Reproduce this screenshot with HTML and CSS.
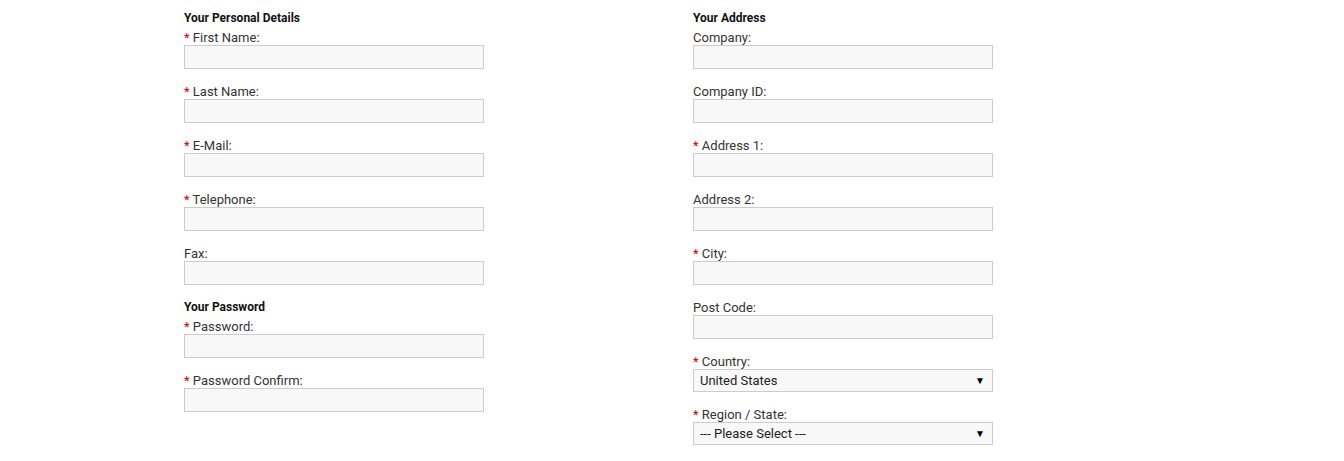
FILE: index.html
```html
<!DOCTYPE html>
<html lang="en">
<head>
<meta charset="UTF-8">
<meta name="viewport" content="width=device-width, initial-scale=1.0">
<title>Register Account</title>
<link rel="stylesheet" href="styles.css">
</head>
<body>
<form class="register">
  <div class="column">
    <fieldset>
      <legend>Your Personal Details</legend>
      <div class="field">
        <label><span class="req">*</span> First Name:</label>
        <input type="text">
      </div>
      <div class="field">
        <label><span class="req">*</span> Last Name:</label>
        <input type="text">
      </div>
      <div class="field">
        <label><span class="req">*</span> E-Mail:</label>
        <input type="text">
      </div>
      <div class="field">
        <label><span class="req">*</span> Telephone:</label>
        <input type="text">
      </div>
      <div class="field">
        <label>Fax:</label>
        <input type="text">
      </div>
    </fieldset>
    <fieldset>
      <legend>Your Password</legend>
      <div class="field">
        <label><span class="req">*</span> Password:</label>
        <input type="password">
      </div>
      <div class="field">
        <label><span class="req">*</span> Password Confirm:</label>
        <input type="password">
      </div>
    </fieldset>
  </div>
  <div class="column">
    <fieldset>
      <legend>Your Address</legend>
      <div class="field">
        <label>Company:</label>
        <input type="text">
      </div>
      <div class="field">
        <label>Company ID:</label>
        <input type="text">
      </div>
      <div class="field">
        <label><span class="req">*</span> Address 1:</label>
        <input type="text">
      </div>
      <div class="field">
        <label>Address 2:</label>
        <input type="text">
      </div>
      <div class="field">
        <label><span class="req">*</span> City:</label>
        <input type="text">
      </div>
      <div class="field">
        <label>Post Code:</label>
        <input type="text">
      </div>
      <div class="field">
        <label><span class="req">*</span> Country:</label>
        <div class="select">
          <span>United States</span>
          <span class="arrow">&#9660;</span>
        </div>
      </div>
      <div class="field">
        <label><span class="req">*</span> Region / State:</label>
        <div class="select">
          <span>--- Please Select ---</span>
          <span class="arrow">&#9660;</span>
        </div>
      </div>
    </fieldset>
  </div>
</form>
</body>
</html>
```

FILE: styles.css
```css
body {
  margin: 0;
  font-family: Roboto, "Liberation Sans", sans-serif;
  font-size: 13px;
  color: #333;
  background: #fff;
}
.register {
  display: flex;
  padding: 10px 0 0 184px;
}
.column {
  width: 509px;
}
fieldset {
  border: 0;
  margin: 0;
  padding: 0;
}
legend {
  padding: 0;
  font-weight: bold;
  font-size: 12px;
  line-height: 16px;
  color: #111;
  margin-bottom: 3px;
}
.field {
  display: flex;
  flex-direction: column;
  margin-bottom: 14px;
}
.field label {
  padding-top: 1px;
  line-height: 15px;
  font-size: 13px;
}
.req {
  color: #c00;
}
.field input {
  box-sizing: border-box;
  width: 300px;
  height: 24px;
  margin: 0;
  border: 1px solid #ccc;
  background: #f8f8f8;
  font: inherit;
}
.select {
  box-sizing: border-box;
  width: 300px;
  height: 23px;
  border: 1px solid #ccc;
  background: #f8f8f8;
  display: flex;
  align-items: center;
  justify-content: space-between;
  padding: 0 7px 0 6px;
  font-size: 13px;
  color: #222;
}
.select .arrow {
  font-size: 10px;
  color: #000;
}
```
